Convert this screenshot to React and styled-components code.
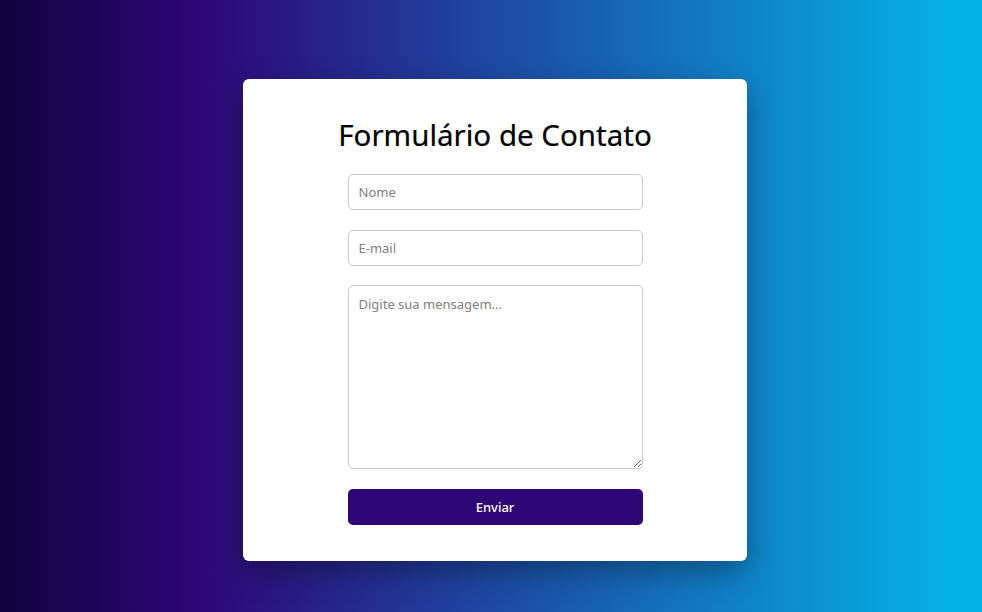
import React from "react";
import styled, { createGlobalStyle } from "styled-components";

const Global = createGlobalStyle`
  html, body { margin: 0; padding: 0; }
  body {
    font-family: "Noto Sans", "Open Sans", sans-serif;
    background: linear-gradient(90deg, #10043e 0%, #2e0676 20%, #04b2e8 97%, #04b2e8 100%);
    min-height: 612px;
  }
  * { box-sizing: border-box; }
`;

const Page = styled.div`
  display: flex;
  justify-content: center;
  align-items: flex-start;
  min-height: 612px;
  padding: 79px 0 51px 8px;
`;

const Card = styled.div`
  width: 504px;
  height: 482px;
  background: #ffffff;
  border-radius: 6px;
  box-shadow: 0 10px 30px rgba(0, 0, 0, 0.35);
  padding: 36px 0 0;
  display: flex;
  flex-direction: column;
  align-items: center;
`;

const Title = styled.h1`
  margin: 0 0 20px;
  font-family: "Noto Sans", sans-serif;
  font-weight: 400;
  font-size: 29.5px;
  line-height: 39px;
  color: #000;
  text-align: center;
  -webkit-text-stroke: 0.2px #000;
`;

const Form = styled.form`
  width: 295px;
  display: flex;
  flex-direction: column;
  gap: 19.5px;
`;

const fieldBase = `
  width: 100%;
  border: 1px solid #c9c9c9;
  border-radius: 5px;
  padding: 0 10px;
  font-family: "Noto Sans", sans-serif;
  font-size: 13px;
  color: #333;
  background: #fff;
  outline: none;
  &::placeholder { color: #808080; }
`;

const Input = styled.input`
  ${fieldBase}
  height: 36px;
`;

const TextArea = styled.textarea`
  ${fieldBase}
  height: 184px;
  padding: 9px 10px;
  resize: vertical;
  display: block;
`;

const Button = styled.button`
  height: 36px;
  width: 100%;
  border: none;
  border-radius: 5px;
  background: #2e0676;
  color: #fff;
  font-family: "Noto Sans", sans-serif;
  font-weight: 500;
  font-size: 13px;
  cursor: pointer;
`;

export default function App() {
  return (
    <>
      <Global />
      <Page>
        <Card>
          <Title>Formulário de Contato</Title>
          <Form onSubmit={(e) => e.preventDefault()}>
            <Input type="text" placeholder="Nome" />
            <Input type="email" placeholder="E-mail" />
            <TextArea placeholder="Digite sua mensagem..." />
            <Button type="submit">Enviar</Button>
          </Form>
        </Card>
      </Page>
    </>
  );
}
